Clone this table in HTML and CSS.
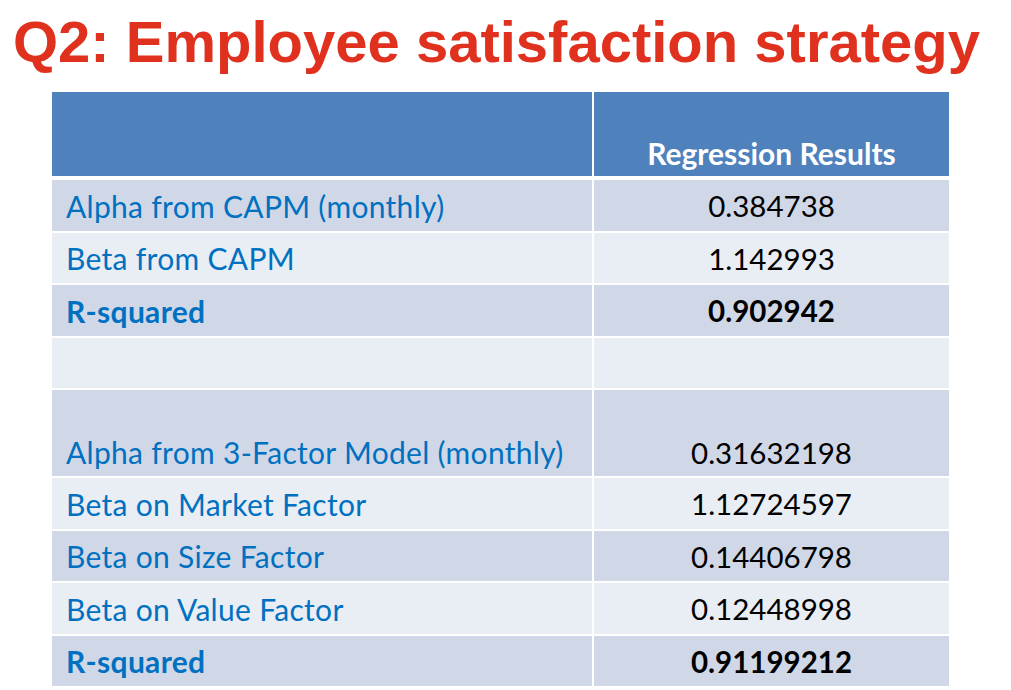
FILE: index.html
```html
<!DOCTYPE html>
<html>
<head>
<meta charset="utf-8">
<link rel="stylesheet" href="styles.css">
</head>
<body>
<h1 class="title">Q2: Employee satisfaction strategy</h1>
<table class="results">
  <thead>
    <tr class="head">
      <th class="label"></th>
      <th class="value">Regression Results</th>
    </tr>
  </thead>
  <tbody>
    <tr class="odd"><td class="label">Alpha from CAPM (monthly)</td><td class="value">0.384738</td></tr>
    <tr class="even"><td class="label">Beta from CAPM</td><td class="value">1.142993</td></tr>
    <tr class="odd bold"><td class="label">R-squared</td><td class="value">0.902942</td></tr>
    <tr class="even"><td class="label"></td><td class="value"></td></tr>
    <tr class="odd tall"><td class="label">Alpha from 3-Factor Model (monthly)</td><td class="value">0.31632198</td></tr>
    <tr class="even"><td class="label">Beta on Market Factor</td><td class="value">1.12724597</td></tr>
    <tr class="odd"><td class="label">Beta on Size Factor</td><td class="value">0.14406798</td></tr>
    <tr class="even"><td class="label">Beta on Value Factor</td><td class="value">0.12448998</td></tr>
    <tr class="odd bold"><td class="label">R-squared</td><td class="value">0.91199212</td></tr>
  </tbody>
</table>
</body>
</html>
```
FILE: styles.css
```css
html, body {
  margin: 0;
  padding: 0;
  background: #ffffff;
}
body {
  padding: 0 0 0 13px;
}
.title {
  margin: 0;
  padding-top: 8px;
  height: 92px;
  box-sizing: border-box;
  font-family: "Liberation Sans", Arial, sans-serif;
  font-weight: bold;
  font-size: 58px;
  line-height: 68px;
  color: #e0311e;
  white-space: nowrap;
}
.results {
  margin-left: 39px;
  border-collapse: separate;
  border-spacing: 0;
  font-family: Lato, "Open Sans", sans-serif;
  font-size: 29.5px;
}
.results th, .results td {
  padding: 0;
  box-sizing: border-box;
  border-bottom: 2.5px solid #ffffff;
}
.results .label {
  width: 542px;
  padding-left: 14px;
  text-align: left;
  border-right: 2px solid #ffffff;
  color: #0070c0;
  font-size: 30px;
  letter-spacing: 0.3px;
}
.results .value {
  width: 355px;
  text-align: center;
  color: #000000;
}
.head th {
  background: #4f81bd;
  height: 88px;
  border-bottom-width: 4px;
  vertical-align: bottom;
  padding-bottom: 5px;
  color: #ffffff;
  font-weight: bold;
  font-size: 30px;
}
.head th.value { color: #ffffff; }
.results td {
  height: 52.5px;
  vertical-align: middle;
  padding-top: 1px;
}
.odd td { background: #d0d8e8; }
.even td { background: #e9edf4; }
.bold td { font-weight: bold; }
.tall td {
  height: 88px;
  vertical-align: bottom;
  padding-bottom: 6px;
}
```
